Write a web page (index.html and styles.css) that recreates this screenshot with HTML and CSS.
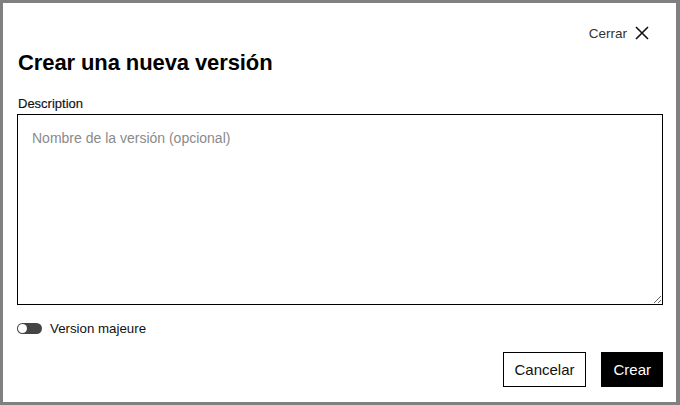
FILE: index.html
```html
<!DOCTYPE html>
<html lang="es">
<head>
<meta charset="utf-8">
<title>Crear una nueva versión</title>
<link rel="stylesheet" href="styles.css">
</head>
<body>
<div class="overlay">
  <div class="dialog" role="dialog" aria-labelledby="dlg-title">
    <div class="dialog-top">
      <button class="close-btn" type="button">
        <span>Cerrar</span>
        <svg class="close-icon" width="16" height="16" viewBox="0 0 16 16" aria-hidden="true">
          <path d="M2 2 L14 14 M14 2 L2 14" stroke="#111" stroke-width="1.6" fill="none"/>
        </svg>
      </button>
    </div>
    <h1 id="dlg-title" class="title">Crear una nueva versión</h1>
    <label class="field-label" for="desc">Description</label>
    <textarea id="desc" class="desc" placeholder="Nombre de la versión (opcional)"></textarea>
    <div class="toggle-row">
      <span class="toggle"><span class="knob"></span></span>
      <span class="toggle-label">Version majeure</span>
    </div>
    <div class="actions">
      <button class="btn btn-secondary" type="button">Cancelar</button>
      <button class="btn btn-primary" type="button">Crear</button>
    </div>
  </div>
</div>
</body>
</html>
```
FILE: styles.css
```css
html, body {
  margin: 0;
  padding: 0;
}
body {
  background: #808080;
  font-family: "Liberation Sans", Arial, sans-serif;
  width: 680px;
  height: 405px;
  overflow: hidden;
}
.overlay {
  padding: 3px 4px 3px 3px;
}
.dialog {
  background: #fff;
  width: 673px;
  height: 399px;
  box-sizing: border-box;
  padding: 20px 14px 15px 14px;
  display: flex;
  flex-direction: column;
}
.dialog-top {
  display: flex;
  justify-content: flex-end;
  height: 20px;
  padding-right: 12px;
}
.close-btn {
  display: flex;
  align-items: center;
  gap: 7px;
  background: none;
  border: 0;
  padding: 0;
  font-family: inherit;
  font-size: 13.5px;
  color: #333;
  cursor: pointer;
}
.close-icon {
  display: block;
}
.title {
  margin: 7px 0 0 1px;
  font-size: 22px;
  line-height: 26px;
  font-weight: 700;
  color: #000;
  letter-spacing: -0.1px;
}
.field-label {
  margin: 20px 0 0 1px;
  font-size: 13px;
  line-height: 15px;
  color: #111;
  -webkit-text-stroke: 0.15px #111;
}
.desc {
  margin: 3px 0 0 0;
  display: block;
  width: 646px;
  height: 191px;
  box-sizing: border-box;
  border: 1px solid #000;
  border-radius: 0;
  padding: 14px 14px;
  font-family: inherit;
  font-size: 14px;
  line-height: 18px;
  resize: both;
  outline: none;
}
.desc::placeholder {
  color: #8a8a8a;
}
.toggle-row {
  display: flex;
  align-items: center;
  gap: 8px;
  margin-top: 17px;
  height: 12px;
}
.toggle {
  display: flex;
  align-items: center;
  width: 25px;
  height: 11px;
  border-radius: 6px;
  background: #444;
  padding: 0 1px;
  box-sizing: border-box;
}
.knob {
  width: 9px;
  height: 9px;
  border-radius: 50%;
  background: #fff;
}
.toggle-label {
  font-size: 13.3px;
  color: #111;
}
.actions {
  margin-top: auto;
  margin-right: -1px;
  display: flex;
  justify-content: flex-end;
  gap: 15px;
}
.btn {
  height: 35px;
  box-sizing: border-box;
  padding: 0 11px;
  font-family: inherit;
  font-size: 15px;
  border: 1px solid #000;
  border-radius: 0;
  cursor: pointer;
}
.btn-secondary {
  background: #fff;
  color: #111;
  padding: 0 11px 0 10px;
}
.btn-primary {
  background: #000;
  color: #fff;
}
```
